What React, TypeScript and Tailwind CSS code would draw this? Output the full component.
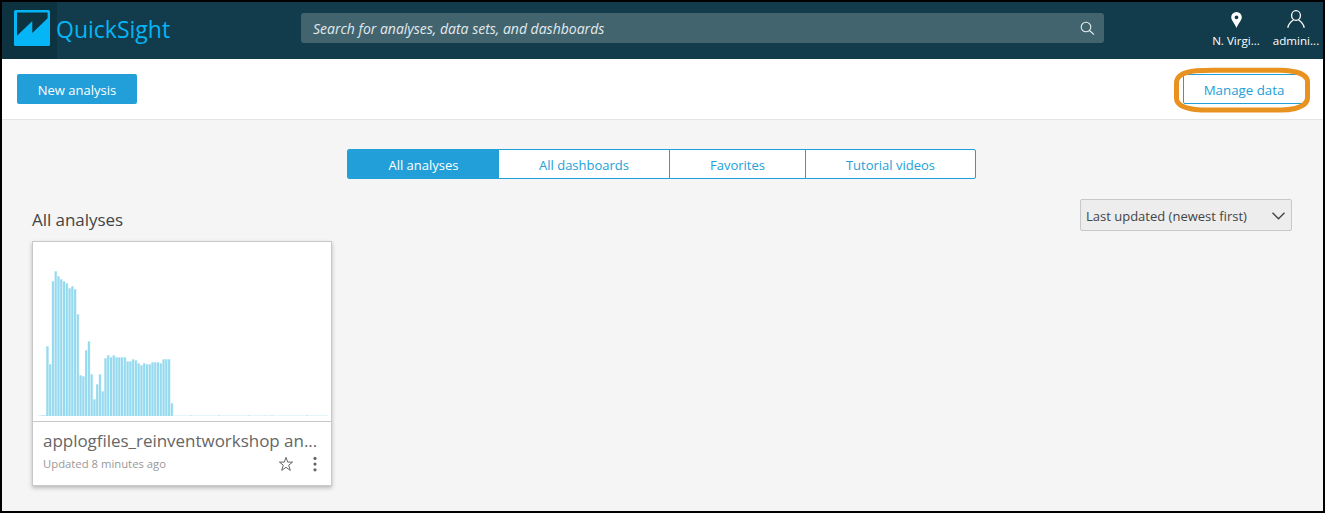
import React from "react";

const BAR_PITCH = 2.765;
const BARS = [
  70, 52, 135, 145, 140, 137, 135, 133, 128, 130, 127, 102, 41, 40, 66, 75, 42, 17, 32, 42, 25, 58, 61, 59, 61, 59,
  59, 59, 59, 55, 55, 57, 56, 53, 51, 53, 52, 52, 54, 54, 54, 53, 57, 57, 57, 13,
];

function Logo() {
  return (
    <svg width="36" height="36" viewBox="0 0 36 36" aria-hidden="true">
      <rect width="36" height="36" rx="1.5" fill="#05b5f5" />
      <path d="M3 2.6H33.6V8.2L18.3 23V11L3 25.8Z" fill="#0d3240" />
    </svg>
  );
}

function SearchIcon() {
  return (
    <svg width="15" height="15" viewBox="0 0 15 15" fill="none" stroke="#e9eff1" strokeWidth="1.1" aria-hidden="true">
      <circle cx="6" cy="6" r="4.8" />
      <path d="M9.5 9.5L14 13.6" />
    </svg>
  );
}

function PinIcon() {
  return (
    <svg width="11" height="16" viewBox="0 0 11 16" aria-hidden="true">
      <path
        d="M5.5 0A5.3 5.3 0 0 0 .2 5.3C.2 8.6 3.6 11 5.5 16C7.4 11 10.8 8.6 10.8 5.3A5.3 5.3 0 0 0 5.5 0ZM5.5 3.4A1.9 1.9 0 1 1 5.5 7.2A1.9 1.9 0 0 1 5.5 3.4Z"
        fill="#fff"
        fillRule="evenodd"
      />
    </svg>
  );
}

function UserIcon() {
  return (
    <svg width="18" height="18" viewBox="0 0 18 18" fill="none" stroke="#fff" strokeWidth="1.3" aria-hidden="true">
      <ellipse cx="9" cy="5.5" rx="4.4" ry="4.8" />
      <path d="M.9 17.8C1.2 14 3.5 11.8 6.6 9.7M17.1 17.8C16.8 14 14.5 11.8 11.4 9.7" />
    </svg>
  );
}

function Thumbnail() {
  return (
    <svg width="298" height="179" viewBox="0 0 298 179" aria-hidden="true">
      <path d="M5 173.5H295" stroke="#e6f5fb" strokeWidth="1" />
      <path d="M8 173.5H13" stroke="#c3e9f4" strokeWidth="1" />
      <path
        d="M157 173.5h2M169 173.5h1M185 173.5h2M215 173.5h2M232 173.5h1M238 173.5h2M257 173.5h1M273 173.5h2"
        stroke="#d5e8f0"
      />
      {BARS.map((h, i) => (
        <g key={i}>
          <rect x={13.2 + i * BAR_PITCH} y={174 - h} width="2.75" height={h} fill="#dcf2fa" />
          <rect x={13.4 + i * BAR_PITCH} y={174.5 - h} width="2" height={h - 0.5} fill="#95daee" />
        </g>
      ))}
    </svg>
  );
}

function Header() {
  return (
    <header className="flex h-[57px] shrink-0 bg-[#123c4b] text-white">
      <div className="flex w-[55px] shrink-0 bg-[#0d3240] pt-2 pl-3">
        <Logo />
      </div>
      <div className="w-[244px] shrink-0 pt-[11px] text-[23px] leading-8 -indent-px text-[#05b5f5]">QuickSight</div>
      <div className="mt-[11px] flex h-[30px] w-[803px] shrink-0 items-center justify-between rounded-[3px] bg-[#41646f] pr-[9px] pl-3">
        <span className="pt-0.5 text-sm leading-5 text-[#e3eaec] italic">
          Search for analyses, data sets, and dashboards
        </span>
        <SearchIcon />
      </div>
      <div className="ml-[103px] flex w-[58px] shrink-0 flex-col items-center pt-[10px]">
        <PinIcon />
        <span className="mt-[5px] text-[11.6px] leading-4">N. Virgi...</span>
      </div>
      <div className="ml-0.5 flex w-[58px] shrink-0 flex-col items-center pt-2">
        <UserIcon />
        <span className="mt-[5px] text-[11.6px] leading-4">admini...</span>
      </div>
    </header>
  );
}

function Toolbar() {
  return (
    <div className="flex h-[61px] shrink-0 items-start justify-between border-b border-[#e4e4e4] bg-white pt-[15px] pr-[16px] pl-[15px] text-[13px]">
      <button className="h-[30px] w-[120px] rounded-[2px] bg-[#229fd9] pt-[3px] text-white">New analysis</button>
      <div className="relative">
        <button className="h-[30px] w-[124px] rounded-[2px] border border-[#229fd9] bg-white pt-[3px] pr-0.5 text-[13.3px] text-[#229fd9]">
          Manage data
        </button>
        <svg className="absolute -top-[7px] -left-[10px]" width="138" height="47" viewBox="0 0 138 47" fill="none">
          <path
            d="M23 3.8Q32 3.2 40 3.2H108Q116 3.2 122 4.8C129 6.5 134.5 10 134.5 15V31C134.5 36 129 39.5 122 41.5Q116 43 108 43H40Q30 43.2 22 42.4C10 41 3.5 37 3.5 31V16C3.5 9 11 5 23 3.8Z"
            stroke="#e9921f"
            strokeWidth="5"
          />
        </svg>
      </div>
    </div>
  );
}

function Tabs() {
  return (
    <div className="flex h-[30px] w-[629px] overflow-hidden rounded-[2px] border border-[#229fd9] bg-white text-[13px] leading-[31px] text-[#229fd9]">
      <div className="w-[151px] bg-[#229fd9] text-center text-white">All analyses</div>
      <div className="w-[171px] border-r border-[#229fd9] text-center">All dashboards</div>
      <div className="w-[136px] border-r border-[#229fd9] text-center">Favorites</div>
      <div className="w-[169px] text-center">Tutorial videos</div>
    </div>
  );
}

function AnalysisCard() {
  return (
    <article className="h-[245px] w-[300px] border border-[#c8c8c8] bg-white shadow-[0_2px_4px_rgba(0,0,0,0.25)]">
      <div className="h-[180px] border-b border-[#c8c8c8]">
        <Thumbnail />
      </div>
      <div className="pt-[7px] pr-2.5 pl-[10px]">
        <h3 className="text-[17px] leading-6 tracking-[-0.03px] whitespace-nowrap text-[#666]">
          applogfiles_reinventworkshop an...
        </h3>
        <div className="flex items-center">
          <span className="text-[11.3px] leading-[22px] text-[#999]">Updated 8 minutes ago</span>
          <svg className="ml-auto" width="16" height="16" viewBox="0 0 16 16" fill="none" stroke="#666" aria-hidden="true">
            <path d="M8 1.4L9.7 6.1H14.6L10.7 9.2L12.3 14.4L8 11.3L3.7 14.4L5.3 9.2L1.4 6.1H6.3Z" />
          </svg>
          <svg className="mr-1 ml-[19px]" width="4" height="16" viewBox="0 0 4 16" fill="#666" aria-hidden="true">
            <circle cx="2" cy="2.4" r="1.6" />
            <circle cx="2" cy="8.1" r="1.6" />
            <circle cx="2" cy="13.8" r="1.6" />
          </svg>
        </div>
      </div>
    </article>
  );
}

export default function App() {
  return (
    <div className="flex h-[513px] w-[1325px] flex-col overflow-hidden border-2 border-black bg-[#f5f5f5] font-['Open_Sans',sans-serif]">
      <Header />
      <Toolbar />
      <main className="pt-[29px] pl-[30px]">
        <div className="pl-[315px]">
          <Tabs />
        </div>
        <div className="mt-5 flex h-[42px] items-start justify-between pr-[31px]">
          <h2 className="pt-[9px] text-[17px] leading-6 tracking-[-0.05px] text-[#444]">All analyses</h2>
          <div className="flex h-8 w-[212px] items-center justify-between rounded-[2px] border border-[#c8c8c8] bg-[#ededed] pr-[6px] pl-[5px] text-[13px] text-[#444]">
            <span className="pt-[3px]">Last updated (newest first)</span>
            <svg className="mt-0.5" width="13" height="8" viewBox="0 0 13 8" fill="none" stroke="#444" strokeWidth="1.4" aria-hidden="true">
              <path d="M.5 .8L6.5 6.8L12.5 .8" />
            </svg>
          </div>
        </div>
        <AnalysisCard />
      </main>
    </div>
  );
}
